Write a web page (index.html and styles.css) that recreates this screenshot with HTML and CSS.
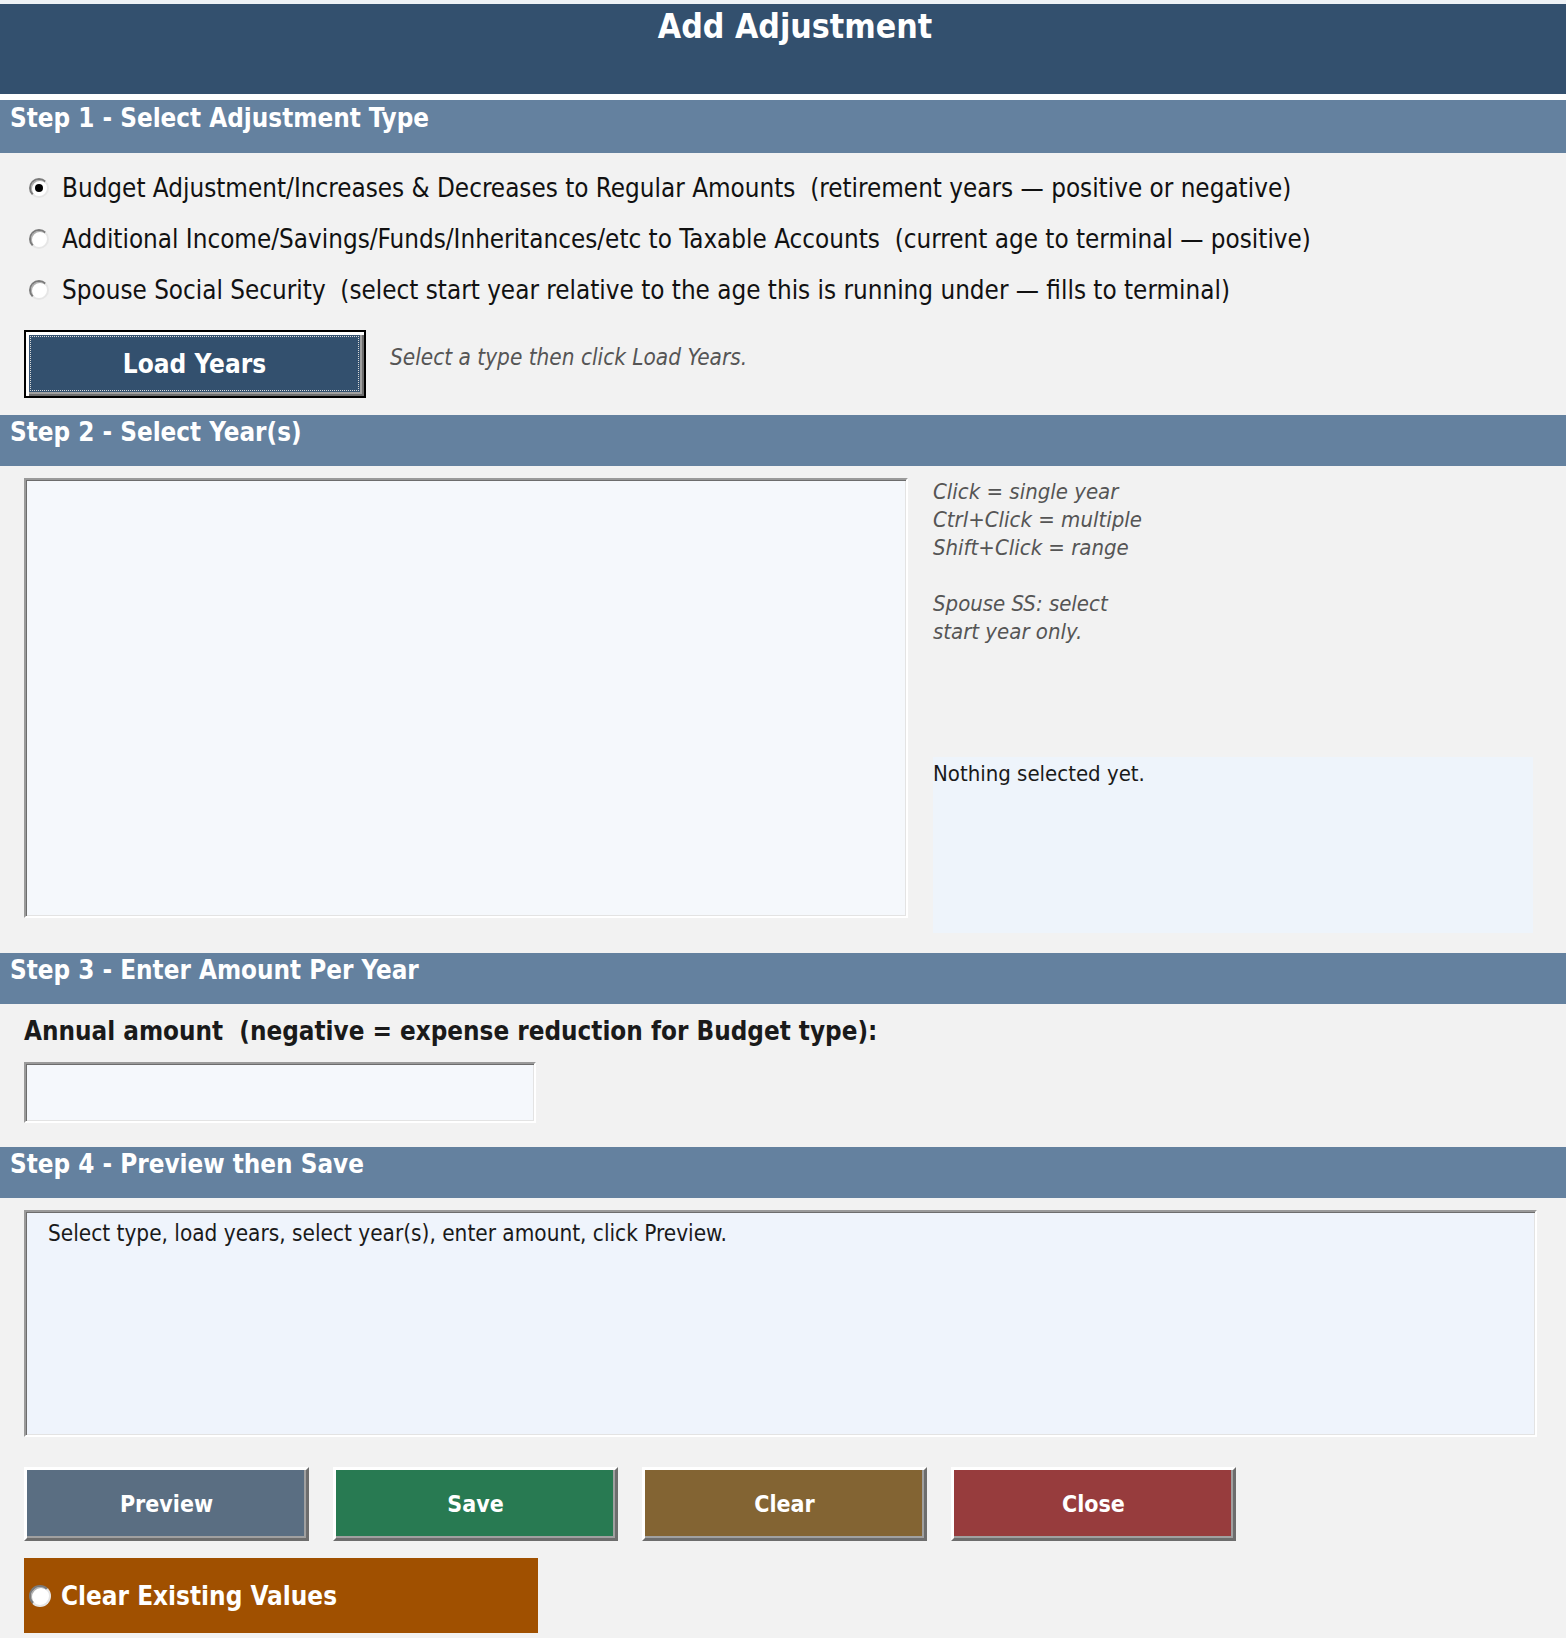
FILE: index.html
```html
<!DOCTYPE html>
<html lang="en">
<head>
<meta charset="utf-8">
<title>Add Adjustment</title>
<link rel="stylesheet" href="styles.css">
</head>
<body>
<div class="page">
  <header class="title-bar">
    <h1 class="title">Add Adjustment</h1>
  </header>

  <section class="step step-first">
    <h2 class="step-bar">Step 1 - Select Adjustment Type</h2>
    <div class="step-body step1-body">
      <div class="radio-list">
        <label class="radio-row"><input class="radio" type="radio" name="atype" checked><span class="radio-text">Budget Adjustment/Increases &amp; Decreases to Regular Amounts&nbsp; (retirement years — positive or negative)</span></label>
        <label class="radio-row"><input class="radio" type="radio" name="atype"><span class="radio-text">Additional Income/Savings/Funds/Inheritances/etc to Taxable Accounts&nbsp; (current age to terminal — positive)</span></label>
        <label class="radio-row"><input class="radio" type="radio" name="atype"><span class="radio-text">Spouse Social Security&nbsp; (select start year relative to the age this is running under — fills to terminal)</span></label>
      </div>
      <div class="load-row">
        <button class="load-btn" type="button"><span class="focus-rect">Load Years</span></button>
        <span class="hint">Select a type then click Load Years.</span>
      </div>
    </div>
  </section>

  <section class="step">
    <h2 class="step-bar">Step 2 - Select Year(s)</h2>
    <div class="step-body step2-body">
      <div class="listbox"></div>
      <div class="side">
        <div class="hints">
          <div>Click = single year</div>
          <div>Ctrl+Click = multiple</div>
          <div>Shift+Click = range</div>
          <div>&nbsp;</div>
          <div>Spouse SS: select</div>
          <div>start year only.</div>
        </div>
        <div class="selection-box">Nothing selected yet.</div>
      </div>
    </div>
  </section>

  <section class="step">
    <h2 class="step-bar">Step 3 - Enter Amount Per Year</h2>
    <div class="step-body step3-body">
      <div class="amount-label">Annual amount&nbsp; (negative = expense reduction for Budget type):</div>
      <div class="amount-input"></div>
    </div>
  </section>

  <section class="step">
    <h2 class="step-bar">Step 4 - Preview then Save</h2>
    <div class="step-body step4-body">
      <div class="preview-box">Select type, load years, select year(s), enter amount, click Preview.</div>
      <div class="actions">
        <button class="act-btn btn-preview" type="button">Preview</button>
        <button class="act-btn btn-save" type="button">Save</button>
        <button class="act-btn btn-clear" type="button">Clear</button>
        <button class="act-btn btn-close" type="button">Close</button>
      </div>
      <label class="clear-existing"><input class="radio radio-small" type="radio" name="clr"><span>Clear Existing Values</span></label>
    </div>
  </section>
</div>
</body>
</html>
```

FILE: styles.css
```css
* { box-sizing: border-box; }

html, body {
  margin: 0;
  padding: 0;
  background: #f2f2f2;
}

body {
  font-family: "DejaVu Sans Condensed", "DejaVu Sans", sans-serif;
  color: #111;
  width: 1566px;
  min-height: 1638px;
  overflow: hidden;
}

.page {
  border-top: 4px solid #eef2f6;
}

.title-bar {
  height: 96px;
  background: #33506e;
  border-bottom: 6px solid #ffffff;
  padding: 3px 0 0 24px;
}

.title {
  margin: 0;
  text-align: center;
  color: #fff;
  font-size: 33.6px;
  line-height: 40px;
  font-weight: bold;
}

.step-bar {
  margin: 0;
  height: 51px;
  background: #64819f;
  color: #fff;
  font-size: 25.8px;
  line-height: 30px;
  font-weight: bold;
  padding: 2px 0 0 10px;
}

.step-first .step-bar {
  height: 53px;
  padding-top: 3px;
}

.step-body {
  padding-left: 24px;
}

/* Step 1 */
.step1-body {
  padding-top: 9px;
  padding-bottom: 17px;
}

.radio-row {
  display: flex;
  align-items: center;
  height: 51px;
}

.radio {
  appearance: none;
  -webkit-appearance: none;
  margin: 0 13px 0 5px;
  width: 20px;
  height: 20px;
  border-radius: 50%;
  background: #ffffff;
  border: 2px solid;
  border-color: #7a7a7a #e6e6e6 #e6e6e6 #7a7a7a;
  box-shadow: inset 1px 1px 0 #b0b0b0;
  position: relative;
  flex: none;
}

.radio:checked::after {
  content: "";
  position: absolute;
  left: 4px;
  top: 4px;
  width: 8px;
  height: 8px;
  border-radius: 50%;
  background: #000;
}

.radio-text {
  font-size: 25.8px;
  line-height: 30px;
  color: #111;
  white-space: nowrap;
}

.load-row {
  display: flex;
  align-items: center;
  margin-top: 15px;
}

.load-btn {
  width: 342px;
  height: 68px;
  padding: 0;
  background: #33506e;
  border: 2px solid #000;
  box-shadow: inset 3px 3px 0 #ffffff, inset -2px -2px 0 #6d6d6d, inset -4px -4px 0 #a0a0a0;
  font-family: inherit;
  font-size: 26px;
  font-weight: bold;
  color: #fff;
  display: flex;
  align-items: stretch;
}

.focus-rect {
  flex: 1;
  margin: 4px 5px 5px 4px;
  border: 1px dotted #d8d8d8;
  display: flex;
  align-items: center;
  justify-content: center;
}

.hint {
  margin-left: 24px;
  font-size: 22.4px;
  font-style: italic;
  color: #555;
  margin-top: -14px;
}

/* Step 2 */
.step2-body {
  display: flex;
  align-items: flex-start;
  padding-top: 12px;
  padding-bottom: 20px;
}

.listbox {
  width: 884px;
  height: 440px;
  background: #f5f8fc;
  border-style: solid;
  border-width: 2px 2px 2px 2px;
  border-color: #9a9a9a #ffffff #ffffff #9a9a9a;
  box-shadow: inset 1px 1px 0 #6d6d6d, inset -1px -1px 0 #e3e3e3;
  flex: none;
}

.side {
  margin-left: 25px;
  width: 600px;
}

.hints {
  font-size: 22px;
  line-height: 28px;
  font-style: italic;
  color: #555;
}

.selection-box {
  margin-top: 111px;
  height: 176px;
  background: #eef4fb;
  font-size: 22px;
  line-height: 28px;
  padding-top: 3px;
  color: #1a1a1a;
}

/* Step 3 */
.step3-body {
  padding-top: 12px;
  padding-bottom: 24px;
}

.amount-label {
  font-size: 25.8px;
  line-height: 30px;
  font-weight: bold;
  color: #1a1a1a;
}

.amount-input {
  margin-top: 16px;
  width: 512px;
  height: 61px;
  background: #f5f8fc;
  border-style: solid;
  border-width: 2px;
  border-color: #9a9a9a #ffffff #ffffff #9a9a9a;
  box-shadow: inset 1px 1px 0 #6d6d6d, inset -1px -1px 0 #e3e3e3;
}

/* Step 4 */
.step4-body {
  padding-top: 12px;
}

.preview-box {
  width: 1513px;
  height: 227px;
  background: #eff4fc;
  border-style: solid;
  border-width: 2px;
  border-color: #9a9a9a #ffffff #ffffff #9a9a9a;
  box-shadow: inset 1px 1px 0 #6d6d6d, inset -1px -1px 0 #e3e3e3;
  padding: 7px 22px;
  font-size: 22.4px;
  line-height: 28px;
  color: #1a1a1a;
}

.actions {
  display: flex;
  gap: 24px;
  margin-top: 30px;
}

.act-btn {
  width: 285px;
  height: 74px;
  padding: 0;
  border: 3px solid;
  border-color: #ffffff #6d6d6d #6d6d6d #ffffff;
  box-shadow: inset -2px -2px 0 #a0a0a0;
  font-family: inherit;
  font-size: 23px;
  font-weight: bold;
  color: #fff;
}

.btn-preview { background: #5a6e82; }
.btn-save { background: #287a52; }
.btn-clear { background: #836433; }
.btn-close { background: #973c3d; }

.clear-existing {
  margin-top: 17px;
  width: 514px;
  height: 75px;
  background: #a05000;
  display: flex;
  align-items: center;
  color: #fff;
  font-size: 25.9px;
  font-weight: bold;
}

.radio-small {
  margin: 0 10px 0 5px;
  width: 22px;
  height: 22px;
}
```
